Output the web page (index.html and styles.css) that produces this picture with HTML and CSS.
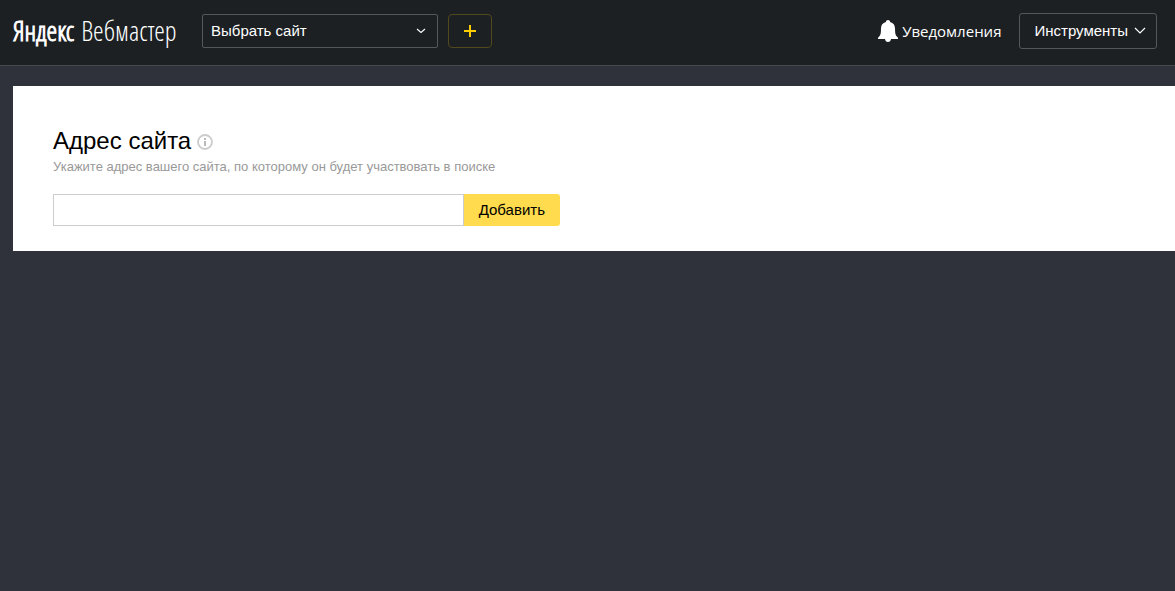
FILE: index.html
```
<!DOCTYPE html>
<html lang="ru">
<head>
<meta charset="utf-8">
<meta name="viewport" content="width=device-width, initial-scale=1">
<title>Яндекс Вебмастер</title>
<link rel="stylesheet" href="styles.css">
</head>
<body>
<header class="header">
  <a class="logo" href="#"><span class="logo-brand">Яндекс</span> <span class="logo-service">Вебмастер</span></a>
  <div class="site-picker">
    <select class="site-select" aria-label="Сайт">
      <option>Выбрать сайт</option>
    </select>
    <svg class="site-arrow" width="10" height="6" viewBox="0 0 10 6" aria-hidden="true"><path d="M1 1l4 3.500L9 1" fill="none" stroke="#fff" stroke-width="1.1"/></svg>
  </div>
  <button class="add-button" type="button" aria-label="Добавить сайт">
    <svg width="12" height="12" viewBox="0 0 12 12" aria-hidden="true"><path d="M6 0v12M0 6h12" stroke="#fc0" stroke-width="2"/></svg>
  </button>
  <nav class="header-right">
    <a class="notifications" href="#">
      <svg width="20" height="22" viewBox="0 0 20 22" aria-hidden="true"><path d="M10 0c1.200 0 1.900.7 2.100 1.900C15.400 2.700 17 5.200 17 8.500c0 4.600.5 6.500 1.600 7.800L20 17.700V19h-7c-.3 1.900-1.300 3-3 3s-2.700-1.100-3-3H0v-1.300l1.400-1.400C2.500 15 3 13.100 3 8.500 3 5.200 4.600 2.700 7.900 1.900 8.100.7 8.800 0 10 0z" fill="#fff"/></svg>
      Уведомления
    </a>
    <button class="tools-button" type="button">
      Инструменты
      <svg width="12" height="8" viewBox="0 0 12 8" aria-hidden="true"><path d="M1 1l5 5 5-5" fill="none" stroke="#fff" stroke-width="1.2"/></svg>
    </button>
  </nav>
</header>
<main class="panel">
  <form class="site-form">
    <div class="heading">
      <h1 class="title"><label for="address">Адрес сайта</label></h1>
      <button class="info" type="button" aria-label="Подробнее">
        <svg width="16" height="16" viewBox="0 0 16 16" aria-hidden="true"><circle cx="8" cy="8" r="7" fill="none" stroke="#ccc" stroke-width="1.800"/><path d="M7 4h2v2H7zM7 7h2v5H7z" fill="#bbb"/></svg>
      </button>
    </div>
    <p class="hint">Укажите адрес вашего сайта, по которому он будет участвовать в поиске</p>
    <div class="address-row">
      <input class="address" id="address" type="text">
      <button class="submit" type="submit">Добавить</button>
    </div>
  </form>
</main>
</body>
</html>
```
FILE: styles.css
```
* {
  box-sizing: border-box;
}

body {
  margin: 0;
  min-height: 100vh;
  background: #2f323a;
  color: #000;
  font-family: "Liberation Sans", Arial, sans-serif;
  font-size: 15px;
  line-height: 18px;
}

button,
input,
select {
  margin: 0;
  font: inherit;
}

svg {
  display: block;
  flex: none;
}

.header {
  display: flex;
  align-items: center;
  height: 66px;
  padding: 0 18px 4px 13px;
  border-bottom: 1px solid #45494d;
  background: #1c2023;
  color: #fff;
}

.logo {
  display: flex;
  flex: none;
  gap: 7px;
  width: 189px;
  color: #fff;
  font-family: "Open Sans Condensed Light", "Open Sans Condensed", "Open Sans", sans-serif;
  font-size: 27px;
  font-weight: 300;
  line-height: 32px;
  text-decoration: none;
  white-space: nowrap;
}

.logo-brand {
  -webkit-text-stroke: 1px #fff;
}

.site-picker {
  position: relative;
  width: 236px;
}

.site-select {
  display: block;
  width: 100%;
  height: 34px;
  padding: 0 30px 0 8px;
  border: 1px solid #54585b;
  border-radius: 2px;
  background: transparent;
  color: #fff;
  appearance: none;
}

.site-arrow {
  position: absolute;
  top: 14px;
  right: 12px;
  pointer-events: none;
}

.add-button {
  display: flex;
  align-items: center;
  justify-content: center;
  width: 44px;
  height: 34px;
  margin-left: 10px;
  padding: 0;
  border: 1px solid #51481c;
  border-radius: 4px;
  background: transparent;
}

.header-right {
  display: flex;
  align-items: center;
  gap: 18px;
  margin-left: auto;
}

.notifications {
  display: flex;
  align-items: center;
  gap: 4px;
  color: #fff;
  font-family: "Open Sans", "Noto Sans", sans-serif;
  text-decoration: none;
}

.tools-button {
  display: flex;
  align-items: center;
  gap: 6px;
  height: 36px;
  padding: 0 10px 0 14px;
  border: 1px solid #54585b;
  border-radius: 3px;
  background: transparent;
  color: #fff;
}

.panel {
  margin: 20px 0 0 13px;
  padding: 40px 40px 25px;
  background: #fff;
}

.heading {
  display: flex;
  align-items: center;
  gap: 6px;
}

.title {
  margin: 0;
  font-size: 24px;
  font-weight: 400;
  line-height: 30px;
}

.info {
  padding: 2px 0 0;
  border: 0;
  background: transparent;
}

.hint {
  margin: 2px 0 19px;
  color: #999;
  font-size: 13px;
  line-height: 17px;
}

.address-row {
  display: flex;
  max-width: 507px;
}

.address {
  flex: 1;
  min-width: 0;
  height: 32px;
  padding: 0 8px;
  border: 1px solid #ccc;
}

.submit {
  height: 32px;
  padding: 0 15px;
  border: 0;
  border-radius: 0 3px 3px 0;
  background: #ffdb4d;
  color: #000;
}
```
